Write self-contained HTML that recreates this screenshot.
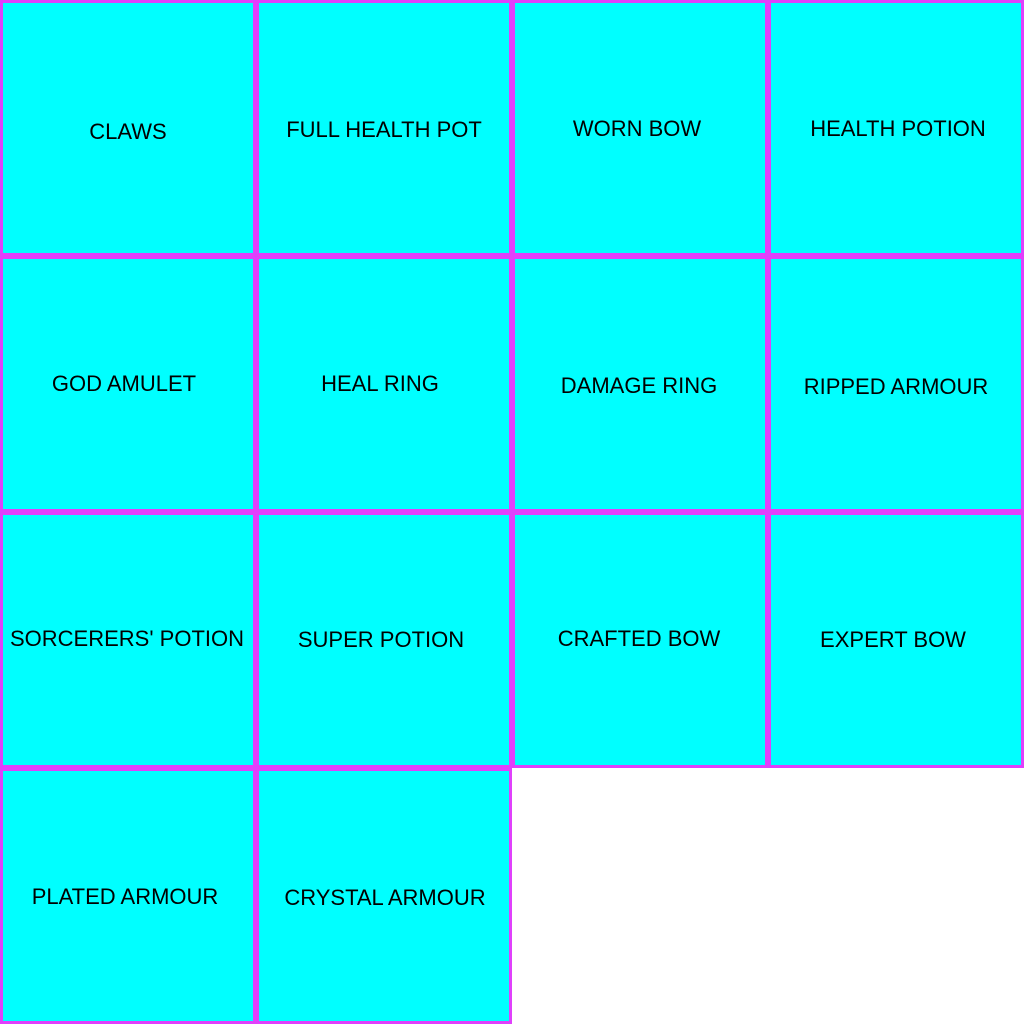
<!DOCTYPE html>
<html><head><style>
body{margin:0;width:1024px;height:1024px;background:#fff;position:relative;overflow:hidden;font-family:"Liberation Sans",sans-serif}
.c{position:absolute;width:250px;height:250px;background:#00ffff;border:3px solid #e040fb}
.t{position:absolute;transform:translate(-50%,-50%);font-size:22px;color:#000;white-space:nowrap}
</style></head><body>
<div class="c" style="left:0;top:0"></div><div class="c" style="left:256px;top:0"></div><div class="c" style="left:512px;top:0"></div><div class="c" style="left:768px;top:0"></div>
<div class="c" style="left:0;top:256px"></div><div class="c" style="left:256px;top:256px"></div><div class="c" style="left:512px;top:256px"></div><div class="c" style="left:768px;top:256px"></div>
<div class="c" style="left:0;top:512px"></div><div class="c" style="left:256px;top:512px"></div><div class="c" style="left:512px;top:512px"></div><div class="c" style="left:768px;top:512px"></div>
<div class="c" style="left:0;top:768px"></div><div class="c" style="left:256px;top:768px"></div>
<div class="t" style="left:128px;top:132px">CLAWS</div>
<div class="t" style="left:384px;top:130px">FULL HEALTH POT</div>
<div class="t" style="left:637px;top:129px">WORN BOW</div>
<div class="t" style="left:898px;top:129px">HEALTH POTION</div>
<div class="t" style="left:124px;top:384px">GOD AMULET</div>
<div class="t" style="left:380px;top:384px">HEAL RING</div>
<div class="t" style="left:639px;top:386px">DAMAGE RING</div>
<div class="t" style="left:896px;top:387px">RIPPED ARMOUR</div>
<div class="t" style="left:127px;top:639px">SORCERERS' POTION</div>
<div class="t" style="left:381px;top:640px">SUPER POTION</div>
<div class="t" style="left:639px;top:639px">CRAFTED BOW</div>
<div class="t" style="left:893px;top:640px">EXPERT BOW</div>
<div class="t" style="left:125px;top:897px">PLATED ARMOUR</div>
<div class="t" style="left:385px;top:898px">CRYSTAL ARMOUR</div>
</body></html>
